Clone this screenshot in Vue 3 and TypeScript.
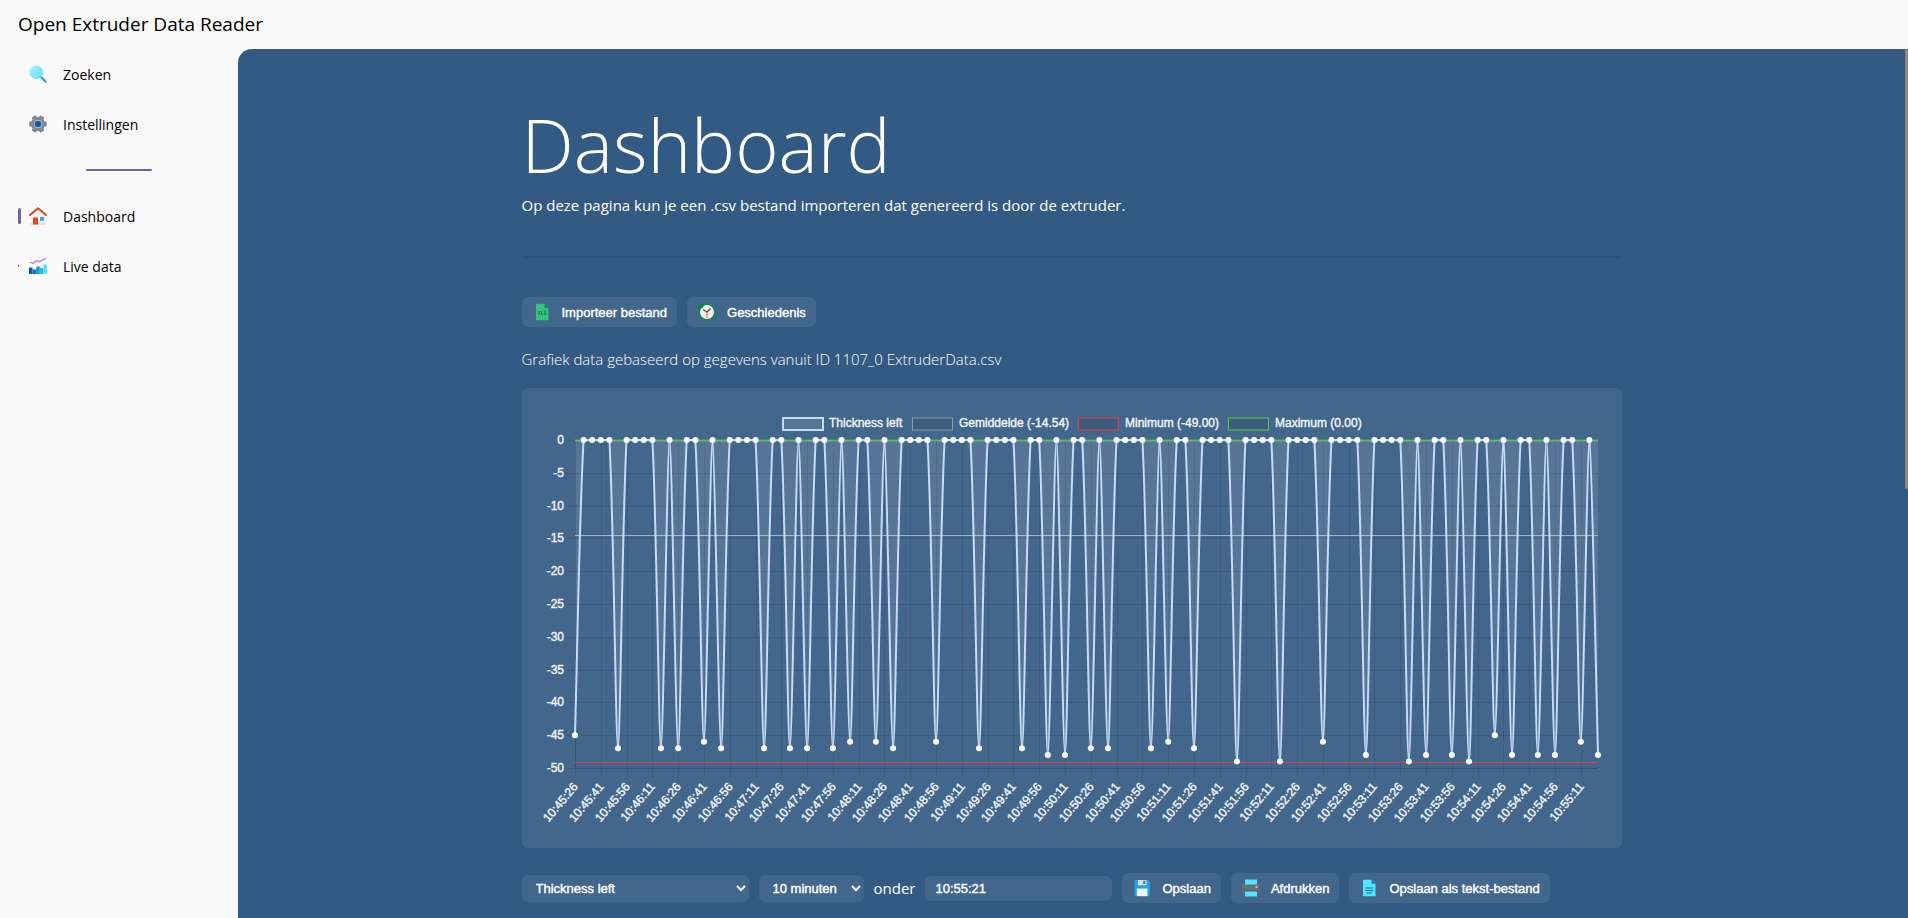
<script setup lang="ts">
import { ref } from 'vue'

interface Point { x: number; y: number }

const LEFT = 53
const RIGHT = 1076
const TOP = 52
const BOTTOM = 380
const COUNT = 120
const TENSION = 0.25

const dips: Record<number, number> = {
  0: -45, 5: -47, 10: -47, 12: -47, 15: -46, 17: -47, 22: -47, 25: -47, 27: -47, 30: -47,
  32: -46, 35: -46, 37: -47, 42: -46, 47: -47, 52: -47, 55: -48, 57: -48, 60: -47, 62: -47,
  67: -47, 69: -46, 72: -47, 77: -49, 82: -49, 87: -46, 92: -48, 97: -49, 99: -48, 102: -48,
  104: -49, 107: -45, 109: -48, 112: -48, 114: -48, 117: -46, 119: -48,
}

const toX = (index: number): number => LEFT + (index * (RIGHT - LEFT)) / (COUNT - 1)
const toY = (value: number): number => TOP + (-value * (BOTTOM - TOP)) / 50
const clampY = (y: number): number => Math.min(BOTTOM, Math.max(TOP, y))

const points: Point[] = Array.from({ length: COUNT }, (_, i) => ({ x: toX(i), y: toY(dips[i] ?? 0) }))

function controls(i: number): { before: Point; after: Point } {
  const current = points[i]
  const prev = points[i - 1] ?? current
  const next = points[i + 1] ?? current
  const d1 = Math.hypot(current.x - prev.x, current.y - prev.y)
  const d2 = Math.hypot(next.x - current.x, next.y - current.y)
  const a = (TENSION * d1) / (d1 + d2)
  const b = (TENSION * d2) / (d1 + d2)
  return {
    before: { x: current.x - a * (next.x - prev.x), y: clampY(current.y - a * (next.y - prev.y)) },
    after: { x: current.x + b * (next.x - prev.x), y: clampY(current.y + b * (next.y - prev.y)) },
  }
}

const linePath = points
  .map((p, i) => {
    if (i === 0) return `M${p.x} ${p.y}`
    const c1 = controls(i - 1).after
    const c2 = controls(i).before
    return `C${c1.x} ${c1.y} ${c2.x} ${c2.y} ${p.x} ${p.y}`
  })
  .join('')
const areaPath = `${linePath}L${RIGHT} ${TOP}L${LEFT} ${TOP}Z`

const pad = (n: number): string => String(n).padStart(2, '0')
const xTicks = Array.from({ length: 40 }, (_, i) => {
  const seconds = 45 * 60 + 26 + i * 15
  return {
    x: Math.round(toX(i * 3)) + 0.5,
    label: `${pad(10 + Math.floor(seconds / 3600))}:${pad(Math.floor(seconds / 60) % 60)}:${pad(seconds % 60)}`,
  }
})
const yTicks = Array.from({ length: 11 }, (_, i) => ({ y: Math.round(toY(-5 * i)) + 0.5, label: String(i === 0 ? 0 : -5 * i) }))

const legend = [
  { x: 261, label: 'Thickness left', kind: 'primary' },
  { x: 391, label: 'Gemiddelde (-14.54)', kind: 'average' },
  { x: 557, label: 'Minimum (-49.00)', kind: 'minimum' },
  { x: 707, label: 'Maximum (0.00)', kind: 'maximum' },
]

const series = ref('Thickness left')
const period = ref('10 minuten')
const until = ref('10:55:21')
</script>

<template>
  <div class="app">
    <header class="titlebar">Open Extruder Data Reader</header>
    <div class="body">
      <nav class="sidebar" aria-label="Navigatie">
        <a class="item" href="#zoeken">
          <span class="marker"></span>
          <svg class="icon" viewBox="0 0 18 18" aria-hidden="true">
            <defs><linearGradient id="lens" x1="0" y1="0" x2="1" y2="1"><stop offset="0" stop-color="#a4f4ff" /><stop offset="1" stop-color="#62dcf8" /></linearGradient></defs>
            <path d="M11.5 11.500l5 5" stroke="#2c9be6" stroke-width="2.200" stroke-linecap="round" />
            <circle cx="7.300" cy="7.300" r="6.800" fill="url(#lens)" />
          </svg>
          <span>Zoeken</span>
        </a>
        <a class="item" href="#instellingen">
          <span class="marker"></span>
          <svg class="icon" viewBox="0 0 18 18" aria-hidden="true">
            <g fill="#7d8993">
              <circle cx="9" cy="9" r="7" />
              <rect v-for="angle in [30, 90, 150, 210, 270, 330]" :key="angle" x="6.500" y="0.200" width="5" height="5" rx="1.300" :transform="`rotate(${angle} 9 9)`" />
            </g>
            <circle cx="9" cy="9" r="4.300" fill="#b9c6d2" />
            <circle cx="9" cy="9" r="3.300" fill="#155a9c" />
          </svg>
          <span>Instellingen</span>
        </a>
        <hr class="divider" />
        <a class="item" href="#dashboard" aria-current="page">
          <span class="marker active"></span>
          <svg class="icon" viewBox="0 0 18 18" aria-hidden="true">
            <path d="M2.500 8L9 2l6.500 6v9.500h-13z" fill="#f4f4f6" />
            <path d="M1.500 16h15v1.700h-15z" fill="#dcdde3" />
            <path d="M4 10.500h5V17.500H4z" fill="#dd4a14" />
            <path d="M11 10h4v3.800h-4z" fill="#37a6e8" />
            <path d="M1 8L9 1.200 17 8" fill="none" stroke="#d0481c" stroke-width="2" stroke-linecap="round" stroke-linejoin="round" />
          </svg>
          <span>Dashboard</span>
        </a>
        <a class="item" href="#live">
          <span class="marker idle"></span>
          <svg class="icon" viewBox="0 0 18 18" aria-hidden="true">
            <path d="M0 10.500h3.600V17H0z" fill="#0b57a4" />
            <path d="M3.600 12.500h3.600V17H3.600z" fill="#1275c8" />
            <path d="M7.200 9.500h3.600V17H7.200z" fill="#1f95e0" />
            <path d="M10.800 11h3.600v6h-3.600z" fill="#2bb7ee" />
            <path d="M14.400 7.500H18V17h-3.600z" fill="#50e4fd" />
            <path d="M1 5.500l3.500 .8L7.500 3.500l3 1.200L13 3l4-1.500" fill="none" stroke="#c066dc" stroke-width="1.200" stroke-linejoin="round" />
          </svg>
          <span>Live data</span>
        </a>
      </nav>

      <main class="main">
        <div class="scroller">
          <div class="content">
            <h1>Dashboard</h1>
            <p class="intro">Op deze pagina kun je een .csv bestand importeren dat genereerd is door de extruder.</p>
            <hr class="rule" />
            <div class="actions">
              <button type="button" class="button">
                <svg class="icon" viewBox="0 0 18 18" aria-hidden="true">
                  <path d="M3 .8h8.500L15.500 4.800v12.500H3z" fill="#33c481" />
                  <path d="M11.500 .8l4 4h-4z" fill="#17864c" />
                  <path d="M5.200 8l2 3.500m0-3.500l-2 3.500M8.500 8v3.300h1.600M13 8.200h-1.700v1.600h1.600v1.600h-1.800" fill="none" stroke="#176b43" stroke-width=".8" />
                </svg>
                Importeer bestand
              </button>
              <button type="button" class="button">
                <svg class="icon" viewBox="0 0 18 18" aria-hidden="true">
                  <circle cx="9" cy="9" r="7.700" fill="#f2f0ed" stroke="#148a50" stroke-width="1.400" />
                  <path d="M1 1.500l5.500-.5L4.800 4.500 1.500 6.800z" fill="#107c41" />
                  <path d="M9 9v6" stroke="#e79a7d" stroke-width="1.600" />
                  <path d="M5 6.500L9 9l3.500-3.300" fill="none" stroke="#45474c" stroke-width="1.200" />
                </svg>
                Geschiedenis
              </button>
            </div>
            <p class="caption">Grafiek data gebaseerd op gegevens vanuit ID 1107_0 ExtruderData.csv</p>

            <section class="panel">
              <svg class="chart" viewBox="0 0 1100 460" role="img" aria-label="Thickness left">
                <g class="grid">
                  <path v-for="t in yTicks" :key="t.label" :d="`M45 ${t.y}H1076`" />
                  <path v-for="t in xTicks" :key="t.label" :d="`M${t.x} 52V389`" />
                  <path d="M53.500 52V380M53 380.500H1076" />
                </g>
                <path class="average" d="M53 147.500H1076" />
                <path class="minimum" d="M53 374.500H1076" />
                <path class="maximum" d="M53 52.500H1076" />
                <path class="area" :d="areaPath" />
                <path class="line" :d="linePath" />
                <circle v-for="p in points" :key="p.x" class="dot" :cx="p.x" :cy="p.y" r="3" />
                <g class="labels">
                  <text v-for="t in yTicks" :key="t.label" x="42" :y="t.y + 3" text-anchor="end">{{ t.label }}</text>
                  <text v-for="t in xTicks" :key="t.label" text-anchor="end" :transform="`translate(${t.x + 3} 399) rotate(-50)`">{{ t.label }}</text>
                </g>
                <g v-for="entry in legend" :key="entry.label">
                  <rect :class="['swatch', entry.kind]" :x="entry.kind === 'primary' ? entry.x : entry.x - 0.5" y="30" width="40" height="12" />
                  <text class="labels" :x="entry.x + 46" y="39">{{ entry.label }}</text>
                </g>
              </svg>
            </section>

            <div class="controls">
              <select v-model="series" class="field series" aria-label="Meetreeks">
                <option>Thickness left</option>
              </select>
              <select v-model="period" class="field period" aria-label="Periode">
                <option>10 minuten</option>
              </select>
              <label class="until" for="until">onder</label>
              <input id="until" v-model="until" class="field time" type="text" />
              <button type="button" class="button">
                <svg class="icon" viewBox="0 0 18 18" aria-hidden="true">
                  <path d="M1.500 2.200Q1.500 1 2.700 1H15l1.800 1.800v13.400q0 1-1 1H2.700q-1.200 0-1.200-1.200z" fill="#25a5e8" />
                  <path d="M5 1h8.500v5.200H5z" fill="#d9dee6" />
                  <path d="M10.200 1.800h2V5h-2z" fill="#2b78b4" />
                  <path d="M3.800 9.500h10.600v7.700H3.800z" fill="#f2f2f5" />
                </svg>
                Opslaan
              </button>
              <button type="button" class="button">
                <svg class="icon" viewBox="0 0 18 18" aria-hidden="true">
                  <path d="M3 .5h12v6H3z" fill="#50e6ff" />
                  <path d="M.5 5.500h17v9H.5z" fill="#697077" />
                  <path d="M2 11.500h14v1.600H2z" fill="#4a5057" />
                  <path d="M13.500 7.300h2v1.500h-2z" fill="#c9d2d9" />
                  <path d="M3 12.500h12v5H3z" fill="#50e6ff" />
                </svg>
                Afdrukken
              </button>
              <button type="button" class="button">
                <svg class="icon" viewBox="0 0 18 18" aria-hidden="true">
                  <path d="M3 .8h8.500L15.500 4.800v12.500H3z" fill="#50e6ff" />
                  <path d="M11.500 .8l4 4h-4z" fill="#1b6fd0" />
                  <path d="M5.500 9h7.500M5.500 11.500h7.500M6.500 14h5.500" stroke="#126a96" stroke-width="1.100" />
                </svg>
                Opslaan als tekst-bestand
              </button>
            </div>
          </div>
        </div>
        <span class="thumb" aria-hidden="true"></span>
      </main>
    </div>
  </div>
</template>

<style>
body {
  margin: 0;
}
</style>

<style scoped>
.app {
  display: flex;
  flex-direction: column;
  height: 100vh;
  overflow: hidden;
  background: #f9f9f9;
  color: #000;
  font-family: "Segoe UI", "Open Sans", sans-serif;
  font-size: 15px;
}

.titlebar {
  flex: none;
  box-sizing: border-box;
  height: 49px;
  padding-left: 18px;
  font-size: 19px;
  line-height: 48px;
}

.body {
  display: flex;
  flex: 1;
  min-height: 0;
}

.sidebar {
  flex: none;
  width: 238px;
  font-size: 14px;
}

.item {
  display: flex;
  align-items: center;
  height: 50px;
  padding-left: 18px;
  color: inherit;
  text-decoration: none;
}

.marker {
  width: 3px;
  margin-right: 8px;
}

.marker.active {
  height: 16px;
  border-radius: 2px;
  background: #7562a4;
}

.marker.idle {
  width: 1px;
  height: 2px;
  margin-right: 10px;
  background: #7562a4;
}

.item .icon {
  margin-right: 16px;
}

.icon {
  flex: none;
  width: 18px;
  height: 18px;
}

.divider {
  width: 66px;
  height: 2px;
  margin: 20px auto;
  border: 0;
  border-radius: 1px;
  background: #7562a4;
}

.main {
  position: relative;
  flex: 1;
  min-width: 0;
  overflow: hidden;
  border-radius: 14px 0 0 0;
  background: #335a83;
  color: #fff;
}

.scroller {
  box-sizing: border-box;
  height: 100%;
  padding: 47px 3px 0 0;
  overflow-y: auto;
  scrollbar-width: none;
}

.thumb {
  position: absolute;
  top: 0;
  right: 0;
  width: 3px;
  height: 440px;
  border-radius: 2px;
  background: #8b8783;
}

.content {
  max-width: 1100px;
  margin: 0 auto;
}

h1 {
  margin: 0;
  font-size: 74px;
  font-weight: 300;
  line-height: 98px;
}

.intro {
  margin: 0;
  line-height: 22px;
}

.rule {
  height: 2px;
  margin: 40px 0 39px;
  border: 0;
  background: #2f527d;
}

.actions,
.controls {
  display: flex;
  align-items: center;
  gap: 10px;
}

.button,
.field {
  border: 0;
  border-radius: 6px;
  background-color: #43668c;
  color: #fff;
  font: 13px "Liberation Sans", Arial, sans-serif;
  -webkit-text-stroke: 0.4px currentColor;
}

.button {
  display: flex;
  align-items: center;
  gap: 11px;
  height: 30px;
  padding: 0 10px 0 11px;
}

.caption {
  margin: 21px 0 18px;
  font-weight: 300;
  line-height: 22px;
}

.panel {
  border-radius: 6px;
  background: #43668c;
}

.chart {
  display: block;
  width: 100%;
}

.grid path {
  stroke: rgba(0, 0, 0, 0.1);
}

.average {
  stroke: rgba(255, 255, 255, 0.5);
}

.minimum {
  stroke: #db4348;
}

.maximum {
  stroke: #55ad5c;
  stroke-width: 2;
}

.area {
  fill: rgba(255, 255, 255, 0.1);
}

.line {
  fill: none;
  stroke: #c6dbf8;
  stroke-width: 2;
}

.dot {
  fill: #fff;
}

.labels {
  fill: #f1f4f7;
  stroke: #f1f4f7;
  stroke-width: 0.4px;
  font: 12px "Liberation Sans", Arial, sans-serif;
}

.swatch {
  fill: rgba(0, 0, 0, 0.1);
  stroke-width: 1;
}

.swatch.primary {
  fill: rgba(255, 255, 255, 0.1);
  stroke: #c6dbf8;
  stroke-width: 2;
}

.swatch.average {
  stroke: #8a9bae;
}

.swatch.minimum {
  stroke: #e23b40;
}

.swatch.maximum {
  stroke: #56d83a;
}

.controls {
  padding: 25px 0 60px;
}

.field {
  box-sizing: border-box;
  height: 27px;
  padding: 0 10px;
}

.series {
  width: 227px;
}

.period {
  width: 105px;
}

.time {
  width: 187px;
  height: 25px;
}
</style>
